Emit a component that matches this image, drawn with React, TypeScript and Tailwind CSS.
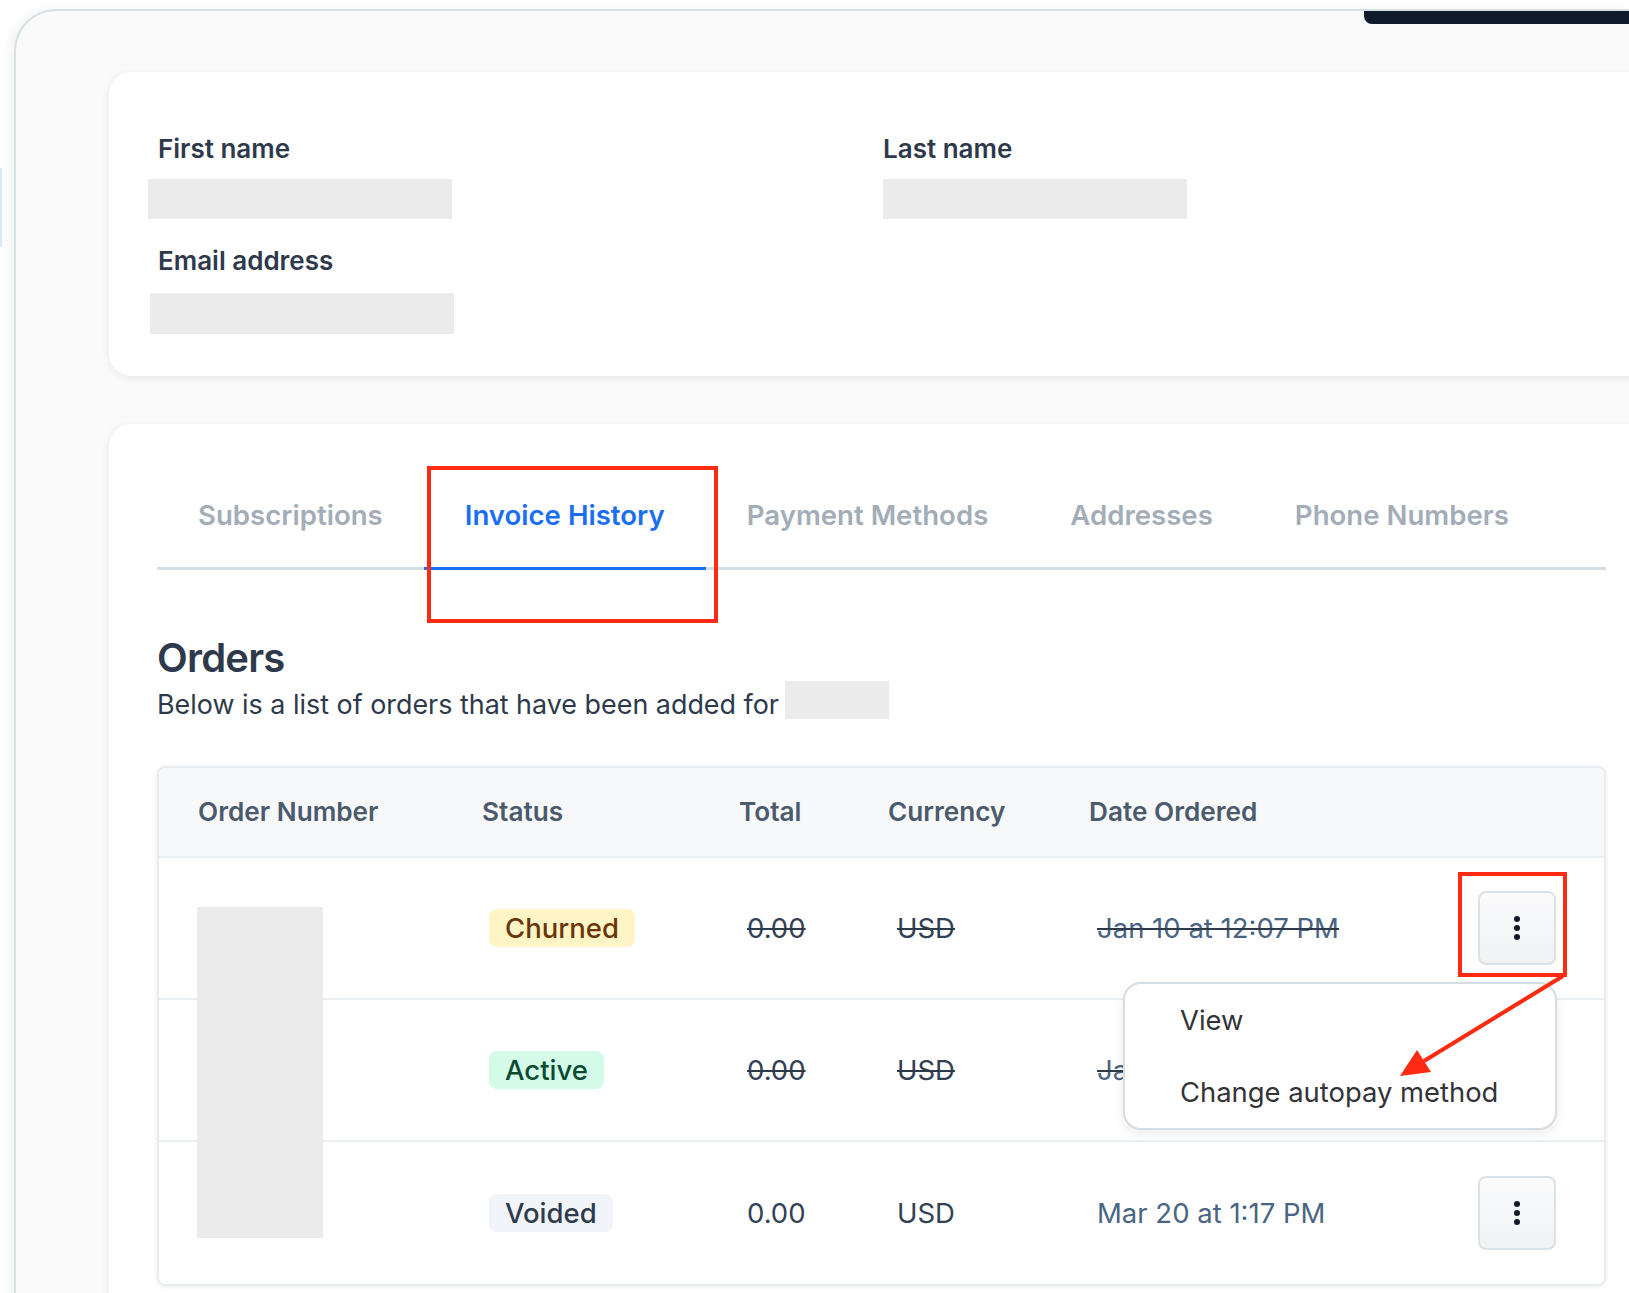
import React from "react";

function Kebab() {
  return (
    <div className="flex h-[74px] w-[78px] flex-col items-center justify-center gap-[3px] rounded-[8px] border-2 border-[#dbe2e7] bg-gradient-to-b from-[#fbfbfc] to-[#f0f2f4]">
      <span className="h-[6px] w-[6px] rounded-full bg-[#111827]" />
      <span className="h-[6px] w-[6px] rounded-full bg-[#111827]" />
      <span className="h-[6px] w-[6px] rounded-full bg-[#111827]" />
    </div>
  );
}

type Row = {
  status: string;
  badge: string;
  struck: boolean;
  date: string;
  kebab: boolean;
};

const rows: Row[] = [
  { status: "Churned", badge: "bg-[#fef5c6] text-[#6b3508]", struck: true, date: "Jan 10 at 12:07 PM", kebab: true },
  { status: "Active", badge: "bg-[#d3fbe8] text-[#0b4a32]", struck: true, date: "Jan 10 at 12:07 PM", kebab: false },
  { status: "Voided", badge: "bg-[#f1f4f8] text-[#2f3b4c]", struck: false, date: "Mar 20 at 1:17 PM", kebab: true },
];

export default function App() {
  const strike = "line-through decoration-[#2c3a4a] decoration-2";
  return (
    <div className="relative h-[1293px] w-full overflow-hidden bg-white font-['Inter','Noto_Sans',sans-serif]">
      {/* faint element peeking at the left edge */}
      <div className="absolute left-0 top-[168px] h-[79px] w-[2px] bg-[#d7e9fb]" />

      {/* outer panel */}
      <div className="relative ml-[14px] mt-[9px] h-[1300px] rounded-tl-[42px] border-l-2 border-t-2 border-[#d5e1e5] bg-[#fafafa] pl-[93px] pt-[61px] shadow-[-5px_0_10px_rgba(0,0,0,0.05)]">
        <div className="absolute right-0 top-0 h-[13px] w-[265px] rounded-bl-[8px] bg-[#0f1a2a]" />

        {/* profile card */}
        <div className="w-[1545px] rounded-[22px] bg-white pb-[42px] pl-[49px] pt-[61px] shadow-[0_2px_8px_rgba(0,0,0,0.08)]">
          <div className="grid grid-cols-[725px_1fr]">
            <div>
              <div className="text-[26px] font-semibold leading-[31px] text-[#2e3a4b]">First name</div>
              <div className="-ml-[10px] mt-[15px] h-[40px] w-[304px] bg-[#ebebeb]" />
            </div>
            <div>
              <div className="text-[26px] font-semibold leading-[31px] text-[#2e3a4b]">Last name</div>
              <div className="mt-[15px] h-[40px] w-[304px] bg-[#ebebeb]" />
            </div>
            <div className="mt-[26px]">
              <div className="text-[26px] font-semibold leading-[31px] text-[#2e3a4b]">Email address</div>
              <div className="-ml-[8px] mt-[17px] h-[41px] w-[304px] bg-[#ebebeb]" />
            </div>
          </div>
        </div>

        {/* orders card */}
        <div className="mt-[48px] h-[900px] w-[1545px] rounded-[22px] bg-white pl-[48px] pr-[48px] pt-[75px] shadow-[0_2px_8px_rgba(0,0,0,0.08)]">
          {/* tabs */}
          <div className="flex border-b-[3px] border-[#d6dee4]">
            {["Subscriptions", "Invoice History", "Payment Methods", "Addresses", "Phone Numbers"].map((t) => (
              <div
                key={t}
                className={
                  t === "Invoice History"
                    ? "-mb-[3px] border-b-[3px] border-[#1a6ef5] px-[41px] pb-[36px] text-[27.6px] font-semibold leading-[32px] text-[#1a6ef5]"
                    : "px-[41px] pb-[36px] text-[27.6px] font-semibold leading-[32px] text-[#a3adb8]"
                }
              >
                {t}
              </div>
            ))}
          </div>

          <h2 className="mt-[64px] text-[40px] font-semibold leading-[48px] tracking-[-0.02em] text-[#2e3a4b]">Orders</h2>
          <div className="mt-[6px] flex items-start">
            <span className="text-[26.9px] leading-[32px] text-[#2e3a4b]">Below is a list of orders that have been added for</span>
            <span className="ml-[6px] -mt-[7px] h-[38px] w-[104px] bg-[#ebebeb]" />
          </div>

          {/* table */}
          <div className="relative mt-[46px] rounded-[8px] border-2 border-[#e9ecef] shadow-[0_1px_4px_rgba(0,0,0,0.08)]">
            <div className="grid h-[90px] grid-cols-[323px_257px_149px_201px_1fr] items-center rounded-t-[6px] border-b-2 border-[#eceff2] bg-[#f7f8fa] text-[26.2px] font-semibold text-[#4b5a6d]">
              <div className="pl-[39px]">Order Number</div>
              <div>Status</div>
              <div>Total</div>
              <div>Currency</div>
              <div>Date Ordered</div>
            </div>
            {rows.map((r, i) => (
              <div
                key={i}
                className={
                  "grid h-[142px] grid-cols-[323px_257px_149px_201px_1fr] items-center text-[27.5px] leading-[32px] " +
                  (i < rows.length - 1 ? "border-b-2 border-[#eceff2]" : "")
                }
              >
                <div />
                <div className="pl-[7px]">
                  <span className={"inline-block rounded-[8px] px-[16px] py-[3px] font-medium " + r.badge}>{r.status}</span>
                </div>
                <div className={"pl-[8px] text-[#334155] " + (r.struck ? strike : "")}>0.00</div>
                <div className={"pl-[9px] text-[#334155] " + (r.struck ? strike : "")}>USD</div>
                <div className="flex items-center justify-between pl-[8px] pr-[48px]">
                  <span className={"text-[#4a6583] " + (r.struck ? strike : "")}>{r.date}</span>
                  {r.kebab ? <Kebab /> : <span />}
                </div>
              </div>
            ))}

            {/* redacted order numbers */}
            <div className="absolute left-[38px] top-[139px] h-[331px] w-[126px] bg-[#ebebeb]" />

            {/* dropdown menu */}
            <div className="absolute left-[964px] top-[214px] w-[434px] rounded-[18px] border-2 border-[#d5dde3] bg-white pb-[20px] pl-[55px] pt-[20px] text-[27.4px] leading-[32px] text-[#333338] shadow-[0_4px_12px_rgba(0,0,0,0.08)]">
              <div>View</div>
              <div className="mt-[40px]">Change autopay method</div>
            </div>
          </div>
        </div>
      </div>

      {/* annotations */}
      <div className="absolute left-[427px] top-[466px] h-[157px] w-[291px] border-4 border-[#ff2a12]" />
      <div className="absolute left-[1458px] top-[872px] h-[105px] w-[109px] border-4 border-[#ff2a12]" />
      <svg className="absolute left-0 top-0" width="1629" height="1293" viewBox="0 0 1629 1293" fill="none">
        <line x1="1563" y1="976" x2="1424" y2="1061" stroke="#ff2a12" strokeWidth="4" />
        <polygon points="1400,1076 1431,1072 1417,1050" fill="#ff2a12" />
      </svg>
    </div>
  );
}
